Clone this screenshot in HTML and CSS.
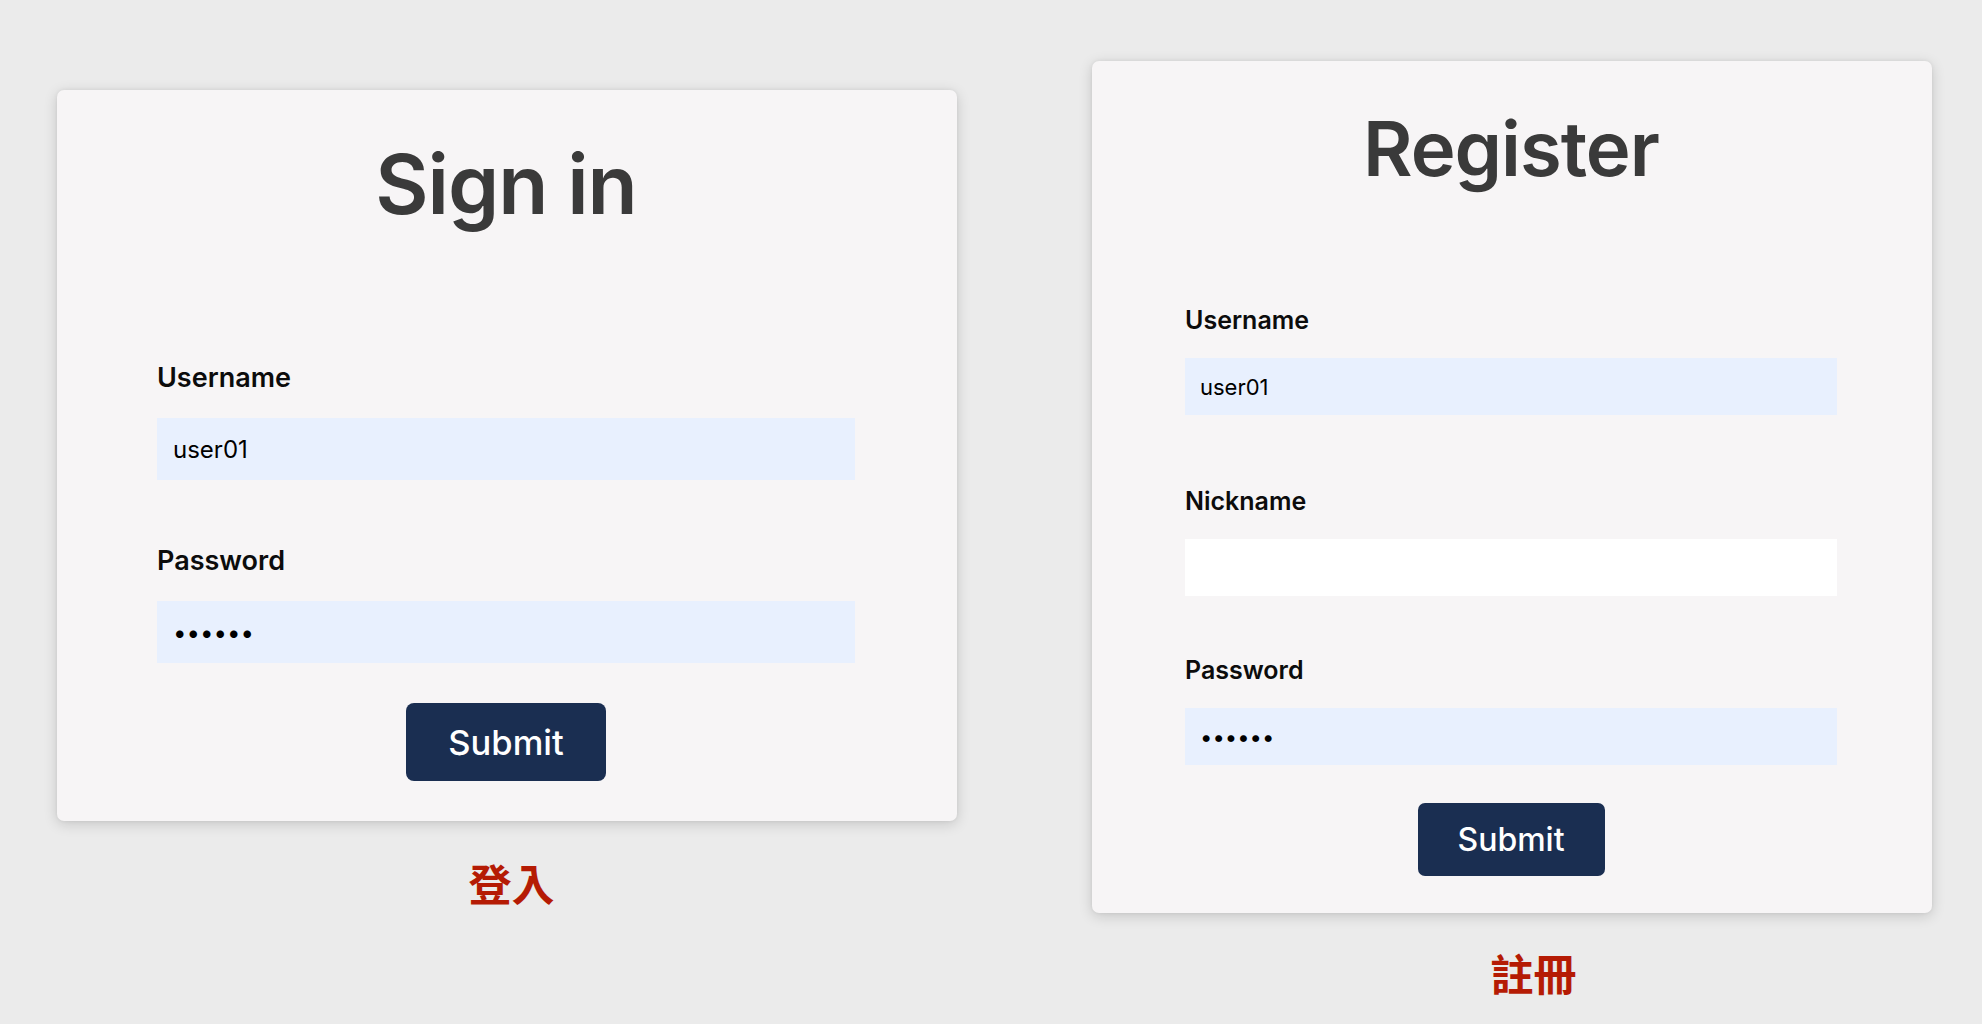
FILE: index.html
```html
<!DOCTYPE html>
<html lang="zh-Hant">
<head>
<meta charset="utf-8">
<title>Sign in / Register</title>
<link rel="stylesheet" href="styles.css">
</head>
<body>
<main class="page">
  <figure class="shot shot--signin">
    <form class="card card--signin">
      <h1 class="card__title">Sign in</h1>
      <div class="field">
        <label class="field__label" for="si-user">Username</label>
        <input class="field__input field__input--filled" id="si-user" type="text" value="user01">
      </div>
      <div class="field">
        <label class="field__label" for="si-pass">Password</label>
        <input class="field__input field__input--filled" id="si-pass" type="password" value="123456">
      </div>
      <button class="btn" type="button">Submit</button>
    </form>
    <figcaption class="caption">登入</figcaption>
  </figure>

  <figure class="shot shot--register">
    <form class="card card--register">
      <h1 class="card__title">Register</h1>
      <div class="field">
        <label class="field__label" for="rg-user">Username</label>
        <input class="field__input field__input--filled" id="rg-user" type="text" value="user01">
      </div>
      <div class="field field--wide">
        <label class="field__label" for="rg-nick">Nickname</label>
        <input class="field__input" id="rg-nick" type="text" value="">
      </div>
      <div class="field">
        <label class="field__label" for="rg-pass">Password</label>
        <input class="field__input field__input--filled" id="rg-pass" type="password" value="123456">
      </div>
      <button class="btn" type="button">Submit</button>
    </form>
    <figcaption class="caption">註冊</figcaption>
  </figure>
</main>
</body>
</html>
```

FILE: styles.css
```css
* {
  box-sizing: border-box;
}

html,
body {
  margin: 0;
  padding: 0;
}

body {
  background: #ebebeb;
  font-family: Inter, "Noto Sans", "Liberation Sans", sans-serif;
  color: #000;
  min-height: 1024px;
}

.page {
  display: flex;
  align-items: flex-start;
}

.shot {
  margin: 0;
  display: flex;
  flex-direction: column;
}

.shot--signin {
  margin: 90px 0 0 57px;
}

.shot--register {
  margin: 61px 0 0 135px;
}

/* ---------- card ---------- */
.card {
  --pad-top: 54px;
  --pad-left: 100px;
  --pad-right: 102px;
  --pad-bottom: 40px;
  --title-size: 82px;
  --title-gap: 138px;
  --label-size: 27px;
  --label-gap: 27px;
  --input-h: 62px;
  --input-size: 24px;
  --input-pad: 16px;
  --field-gap: 67px;
  --btn-gap: 40px;
  --btn-size: 34.5px;
  --btn-w: 200px;
  --btn-h: 78px;
  --btn-radius: 8px;

  display: flex;
  flex-direction: column;
  width: 900px;
  padding: var(--pad-top) var(--pad-right) var(--pad-bottom) var(--pad-left);
  background: #f7f5f6;
  border-radius: 7px;
  box-shadow: 0 3px 14px rgba(0, 0, 0, 0.16), 0 0 4px rgba(0, 0, 0, 0.06);
}

.card--register {
  --pad-top: 49px;
  --pad-left: 93px;
  --pad-right: 95px;
  --pad-bottom: 37px;
  --title-size: 76px;
  --title-gap: 122px;
  --label-size: 25px;
  --label-gap: 25px;
  --input-h: 57px;
  --input-size: 22px;
  --input-pad: 15px;
  --field-gap: 62px;
  --btn-gap: 38px;
  --btn-size: 32px;
  --btn-w: 187px;
  --btn-h: 73px;
  --btn-radius: 7px;

  width: 840px;
}

.card__title {
  margin: 0 0 var(--title-gap);
  font-size: var(--title-size);
  line-height: 1;
  font-weight: 600;
  color: #3a3a3a;
  text-align: center;
  letter-spacing: -1px;
}

.field {
  display: flex;
  flex-direction: column;
}

.field + .field {
  margin-top: var(--field-gap);
}

.field + .field--wide {
  margin-top: calc(var(--field-gap) + 12px);
}

.field__label {
  margin-bottom: var(--label-gap);
  font-size: var(--label-size);
  line-height: 1;
  font-weight: 600;
  color: #0c0c0c;
}

.field__input {
  display: block;
  width: 100%;
  height: var(--input-h);
  padding: 0 var(--input-pad);
  border: none;
  outline: none;
  border-radius: 0;
  background: #ffffff;
  font-family: inherit;
  font-size: var(--input-size);
  color: #000;
}

.field__input--filled {
  background: #e8f0fe;
}

.btn {
  align-self: center;
  width: var(--btn-w);
  height: var(--btn-h);
  margin-top: var(--btn-gap);
  padding: 0;
  border: none;
  border-radius: var(--btn-radius);
  background: #1a2e51;
  color: #ffffff;
  font-family: inherit;
  font-size: var(--btn-size);
  font-weight: 500;
  cursor: pointer;
}

/* ---------- caption ---------- */
.caption {
  margin-top: 40px;
  font-family: "Noto Sans CJK TC", "Noto Sans CJK SC", sans-serif;
  font-size: 43px;
  line-height: 1;
  font-weight: 700;
  color: #b51b04;
  text-align: center;
}

.shot--signin .caption {
  padding-left: 9px;
}

.shot--register .caption {
  margin-top: 38px;
  padding-left: 43px;
}
```
